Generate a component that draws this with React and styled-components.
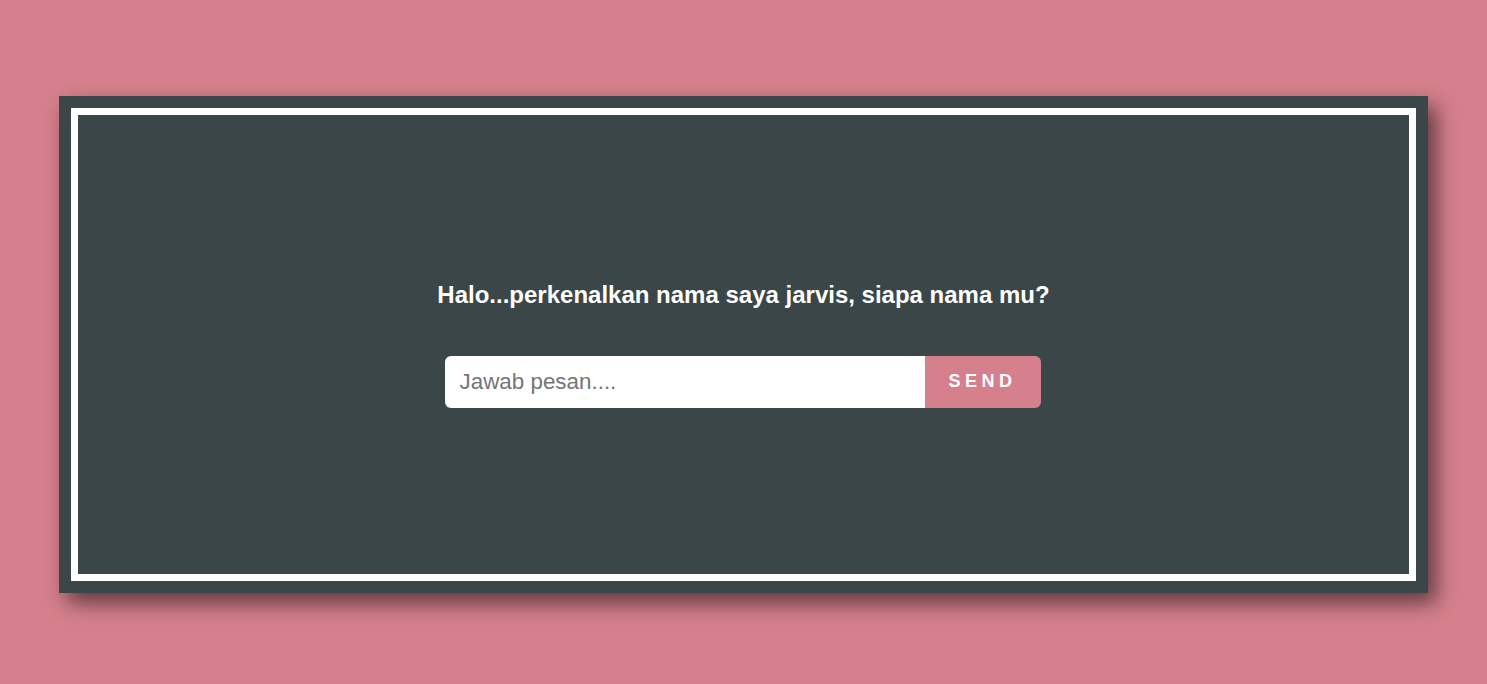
import React, { useState } from "react";
import styled, { createGlobalStyle } from "styled-components";

const GlobalStyle = createGlobalStyle`
  * {
    box-sizing: border-box;
  }
  body {
    margin: 0;
    background-color: #d5808c;
    font-family: "Liberation Sans", Arial, sans-serif;
  }
`;

function App() {
  const [answer, setAnswer] = useState("");

  return (
    <>
      <GlobalStyle />
      <StyledPage>
        <StyledFrame>
          <StyledInner>
            <StyledQuestion>
              Halo...perkenalkan nama saya jarvis, siapa nama mu?
            </StyledQuestion>
            <StyledForm onSubmit={(e) => e.preventDefault()}>
              <StyledInput
                type="text"
                placeholder="Jawab pesan...."
                value={answer}
                onChange={(e) => setAnswer(e.target.value)}
              />
              <StyledButton type="submit">SEND</StyledButton>
            </StyledForm>
          </StyledInner>
        </StyledFrame>
      </StyledPage>
    </>
  );
}

const StyledPage = styled.div`
  min-height: 684px;
  padding-top: 96px;
  display: flex;
  justify-content: center;
  align-items: flex-start;
`;

const StyledFrame = styled.div`
  width: 92%;
  height: 497px;
  padding: 12px;
  background-color: #3a4647;
  box-shadow: 8px 10px 20px rgba(0, 0, 0, 0.55);
`;

const StyledInner = styled.div`
  height: 100%;
  border: 7px solid #ffffff;
  display: flex;
  flex-direction: column;
  align-items: center;
  justify-content: center;
  padding-bottom: 1px;
`;

const StyledQuestion = styled.h3`
  margin: 0 0 47px;
  color: #ffffff;
  font-size: 24px;
  font-weight: 700;
  line-height: 28px;
`;

const StyledForm = styled.form`
  display: flex;
  height: 52px;
  width: 596px;
  margin-right: 2px;
  border-radius: 6px;
  overflow: hidden;
`;

const StyledInput = styled.input`
  flex: 1;
  border: none;
  outline: none;
  padding: 0 15px;
  font-size: 22.4px;
  font-family: "Liberation Sans", Arial, sans-serif;
  color: #333333;
  background-color: #ffffff;

  &::placeholder {
    color: #757575;
  }
`;

const StyledButton = styled.button`
  width: 116px;
  border: none;
  background-color: #d5808c;
  color: #ffffff;
  font-family: "Liberation Sans", Arial, sans-serif;
  font-size: 18px;
  font-weight: 700;
  letter-spacing: 4.5px;
  padding: 0;
  cursor: pointer;
`;

export default App;
